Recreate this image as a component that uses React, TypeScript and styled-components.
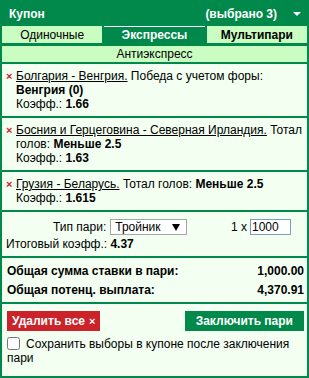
import React from "react";
import styled, { createGlobalStyle } from "styled-components";

const GREEN = "#00894a";
const LIGHT = "#c9fdc1";
const PAPER = "#f2fff1";
const RED = "#cc2229";

const GlobalStyle = createGlobalStyle`
  html, body {
    margin: 0;
    padding: 0;
    background: #fff;
  }
  body {
    font-family: "Liberation Sans", Arial, sans-serif;
    font-size: 12px;
    color: #000;
  }
`;

const Coupon = styled.div`
  width: 309px;
  background: ${GREEN};
  display: flex;
  flex-direction: column;
  padding-bottom: 2px;
  box-sizing: border-box;
`;

const Header = styled.div`
  height: 26px;
  display: flex;
  align-items: center;
  padding: 1px 8px 0 9px;
  box-sizing: border-box;
  color: #fff;
  font-weight: bold;
  font-size: 12px;
  .count {
    margin-left: auto;
  }
  svg {
    margin-left: 16px;
  }
`;

const Tabs = styled.div`
  display: grid;
  grid-template-columns: repeat(3, 1fr);
  gap: 2px;
  padding: 0 2px;
`;

const Tab = styled.div<{ $active?: boolean; $bold?: boolean }>`
  height: 17px;
  box-sizing: border-box;
  display: flex;
  align-items: center;
  justify-content: center;
  background: ${(p) => (p.$active ? GREEN : LIGHT)};
  color: ${(p) => (p.$active ? "#fff" : "#000")};
  font-weight: ${(p) => (p.$active || p.$bold ? "bold" : "normal")};
  border-top: ${(p) => (p.$active ? "1px solid #fff" : "none")};
`;

const SubTab = styled.div`
  height: 16px;
  margin: 3px 2px 0;
  background: ${LIGHT};
  display: flex;
  align-items: center;
  justify-content: center;
`;

const Body = styled.div`
  display: flex;
  flex-direction: column;
  gap: 2px;
  margin: 2px 2px 0;
`;

const Section = styled.div`
  background: ${PAPER};
  line-height: 14px;
`;

const Item = styled(Section)`
  display: flex;
  padding: 5px 2px 5px 4px;
  .remove {
    width: 10px;
    flex: none;
    color: ${RED};
    font-weight: bold;
    font-size: 11px;
  }
  .event {
    text-decoration: underline;
  }
`;

const BetType = styled(Section)`
  display: flex;
  flex-direction: column;
  gap: 2px;
  padding: 7px 3px 5px 4px;
`;

const TypeRow = styled.div`
  display: flex;
  align-items: center;
  height: 16px;
  padding-left: 47px;
  gap: 4px;
  .stake {
    margin-left: auto;
    margin-right: 13px;
    display: flex;
    align-items: center;
    gap: 3px;
  }
`;

const SelectBox = styled.div`
  width: 77px;
  height: 16px;
  box-sizing: border-box;
  border: 1px solid #a5a5a5;
  background: #fff;
  display: flex;
  align-items: center;
  padding: 0 6px 0 4px;
  svg {
    margin-left: auto;
  }
`;

const StakeInput = styled.input`
  width: 41px;
  height: 16px;
  box-sizing: border-box;
  border: 1px solid #7f9db9;
  background: #fff;
  font: inherit;
  padding: 0 1px;
  margin: 0;
  outline: none;
`;

const Summary = styled(Section)`
  display: flex;
  flex-direction: column;
  gap: 5px;
  padding: 6px 3px 5px 5px;
  font-weight: bold;
`;

const SumRow = styled.div`
  display: flex;
  justify-content: space-between;
`;

const Actions = styled(Section)`
  padding: 7px 3px 10px 5px;
  height: 72px;
  box-sizing: border-box;
`;

const ButtonRow = styled.div`
  display: flex;
  justify-content: space-between;
`;

const Button = styled.button<{ $tone: "red" | "green" }>`
  height: 20px;
  border: none;
  margin: 0;
  font-family: inherit;
  font-size: 12px;
  font-weight: bold;
  color: #fff;
  background: ${(p) => (p.$tone === "red" ? RED : GREEN)};
  padding: ${(p) => (p.$tone === "red" ? "0 5px 0 5px" : "0 11px")};
  .x {
    font-size: 11px;
    margin-left: 4px;
  }
`;

const KeepLabel = styled.label`
  display: block;
  margin-top: 6px;
  line-height: 14.4px;
  font-size: 12px;
  input {
    width: 13px;
    height: 13px;
    margin: 0 6px 0 0;
    vertical-align: -2px;
  }
`;

const Caret = () => (
  <svg width="8" height="4" viewBox="0 0 8 4">
    <path d="M0 0 L8 0 L4 4 Z" fill="#fff" />
  </svg>
);

const SelectArrow = () => (
  <svg width="8" height="7" viewBox="0 0 8 7">
    <path d="M0 0 L8 0 L4 7 Z" fill="#000" />
  </svg>
);

const bets = [
  {
    event: "Болгария - Венгрия.",
    market: " Победа с учетом форы: ",
    pick: "Венгрия (0)",
    odds: "1.66",
  },
  {
    event: "Босния и Герцеговина - Северная Ирландия.",
    market: " Тотал голов: ",
    pick: "Меньше 2.5",
    odds: "1.63",
  },
  {
    event: "Грузия - Беларусь.",
    market: " Тотал голов: ",
    pick: "Меньше 2.5",
    odds: "1.615",
  },
];

export default function App() {
  return (
    <>
      <GlobalStyle />
      <Coupon>
        <Header>
          <span>Купон</span>
          <span className="count">(выбрано 3)</span>
          <Caret />
        </Header>
        <Tabs>
          <Tab>Одиночные</Tab>
          <Tab $active>Экспрессы</Tab>
          <Tab $bold>Мультипари</Tab>
        </Tabs>
        <SubTab>Антиэкспресс</SubTab>
        <Body>
          {bets.map((b) => (
            <Item key={b.event}>
              <span className="remove">×</span>
              <div>
                <span className="event">{b.event}</span>
                {b.market}
                <b>{b.pick}</b>
                <br />
                Коэфф.: <b>{b.odds}</b>
              </div>
            </Item>
          ))}
          <BetType>
            <TypeRow>
              <span>Тип пари:</span>
              <SelectBox>
                <span>Тройник</span>
                <SelectArrow />
              </SelectBox>
              <div className="stake">
                <span>1 x</span>
                <StakeInput defaultValue="1000" />
              </div>
            </TypeRow>
            <div>
              Итоговый коэфф.: <b>4.37</b>
            </div>
          </BetType>
          <Summary>
            <SumRow>
              <span>Общая сумма ставки в пари:</span>
              <span>1,000.00</span>
            </SumRow>
            <SumRow>
              <span>Общая потенц. выплата:</span>
              <span>4,370.91</span>
            </SumRow>
          </Summary>
          <Actions>
            <ButtonRow>
              <Button $tone="red">
                Удалить все<span className="x">×</span>
              </Button>
              <Button $tone="green">Заключить пари</Button>
            </ButtonRow>
            <KeepLabel>
              <input type="checkbox" />
              Сохранить выборы в купоне после заключения пари
            </KeepLabel>
          </Actions>
        </Body>
      </Coupon>
    </>
  );
}
